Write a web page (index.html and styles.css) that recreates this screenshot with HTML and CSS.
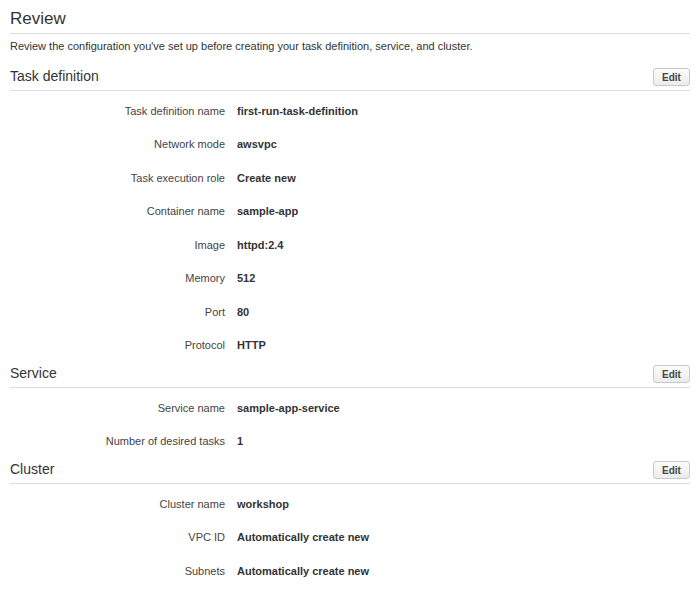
FILE: index.html
```html
<!DOCTYPE html>
<html lang="en">
<head>
    <meta charset="UTF-8">
    <title>Review</title>
    <link rel="stylesheet" href="styles.css">
</head>
<body>
    <div class="page">
        <h1 class="page-title">Review</h1>
        <p class="page-desc">Review the configuration you've set up before creating your task definition, service, and cluster.</p>

        <!-- Task definition -->
        <div class="section-head">
            <h2 class="section-title">Task definition</h2>
            <button class="edit-button">Edit</button>
        </div>
        <div class="rows">
            <div class="row"><span class="label">Task definition name</span><span class="value">first-run-task-definition</span></div>
            <div class="row"><span class="label">Network mode</span><span class="value">awsvpc</span></div>
            <div class="row"><span class="label">Task execution role</span><span class="value">Create new</span></div>
            <div class="row"><span class="label">Container name</span><span class="value">sample-app</span></div>
            <div class="row"><span class="label">Image</span><span class="value">httpd:2.4</span></div>
            <div class="row"><span class="label">Memory</span><span class="value">512</span></div>
            <div class="row"><span class="label">Port</span><span class="value">80</span></div>
            <div class="row"><span class="label">Protocol</span><span class="value">HTTP</span></div>
        </div>

        <!-- Service -->
        <div class="section-head">
            <h2 class="section-title">Service</h2>
            <button class="edit-button">Edit</button>
        </div>
        <div class="rows">
            <div class="row"><span class="label">Service name</span><span class="value">sample-app-service</span></div>
            <div class="row"><span class="label">Number of desired tasks</span><span class="value">1</span></div>
        </div>

        <!-- Cluster -->
        <div class="section-head">
            <h2 class="section-title">Cluster</h2>
            <button class="edit-button">Edit</button>
        </div>
        <div class="rows">
            <div class="row"><span class="label">Cluster name</span><span class="value">workshop</span></div>
            <div class="row"><span class="label">VPC ID</span><span class="value">Automatically create new</span></div>
            <div class="row"><span class="label">Subnets</span><span class="value">Automatically create new</span></div>
        </div>
    </div>
</body>
</html>
```

FILE: styles.css
```css
/* 기본 설정 */
body {
    margin: 0;
    background-color: #fff;
    font-family: "Liberation Sans", Arial, sans-serif;
    color: #333;
}

.page {
    padding: 0 10px;
}

/* 페이지 제목 */
.page-title {
    margin: 8px 0 0;
    padding-bottom: 4px;
    font-size: 17px;
    font-weight: normal;
    line-height: 21px;
    color: #333;
    border-bottom: 1px solid #ddd;
}

.page-desc {
    margin: 5px 0 0;
    font-size: 11px;
    line-height: 14px;
    color: #333;
}

/* 섹션 헤더 */
.section-head {
    display: flex;
    justify-content: space-between;
    align-items: flex-end;
    padding-bottom: 4px;
    border-bottom: 1px solid #ddd;
}

.rows + .section-head {
    margin-top: 0;
}

.page-desc + .section-head {
    margin-top: 13px;
}

.section-title {
    margin: 0;
    font-size: 14px;
    font-weight: normal;
    line-height: 20px;
    color: #333;
}

.edit-button {
    width: 37px;
    height: 18px;
    padding: 0;
    font-family: "Liberation Sans", Arial, sans-serif;
    font-size: 10px;
    font-weight: bold;
    color: #444;
    background: linear-gradient(#fcfcfc, #ececec);
    border: 1px solid #c8c8c8;
    border-radius: 3px;
    cursor: pointer;
}

/* 항목 목록 */
.rows {
    padding: 3px 0 1px;
}

.row {
    display: flex;
    align-items: center;
    height: 33.5px;
    font-size: 11px;
}

.label {
    width: 215px;
    text-align: right;
    color: #444;
}

.value {
    margin-left: 12px;
    font-weight: bold;
    color: #333;
}
```
